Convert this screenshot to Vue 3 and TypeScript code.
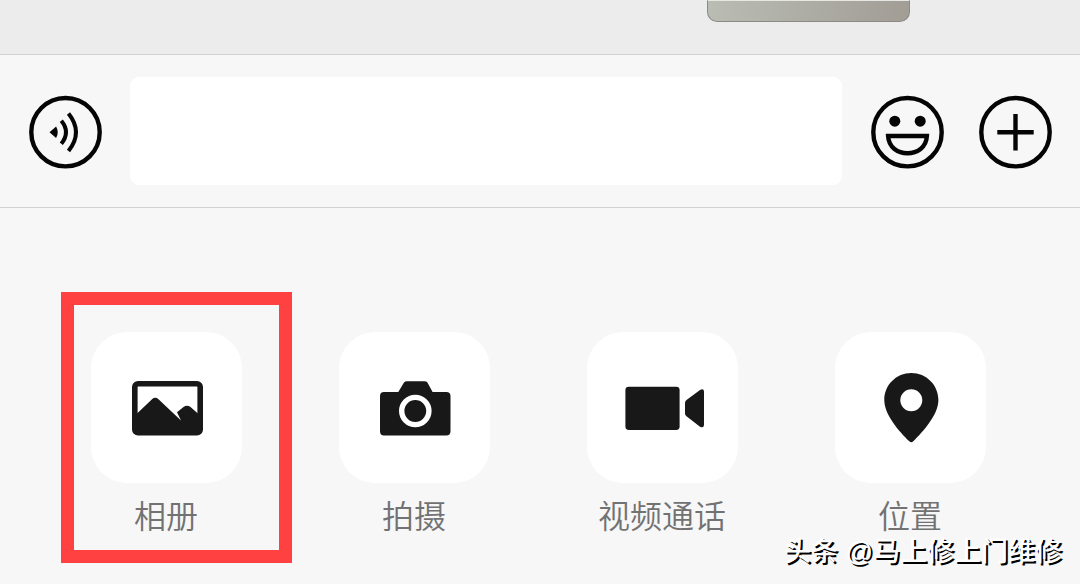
<script setup lang="ts">
import { ref } from 'vue'

type ActionId = 'album' | 'camera' | 'video' | 'location'

interface Action {
  id: ActionId
  label: string
  highlighted?: boolean
}

const message = ref('')

const actions: Action[] = [
  { id: 'album', label: '相册', highlighted: true },
  { id: 'camera', label: '拍摄' },
  { id: 'video', label: '视频通话' },
  { id: 'location', label: '位置' },
]
</script>

<template>
  <main class="chat">
    <div class="history">
      <div class="photo"></div>
    </div>

    <form class="composer" @submit.prevent>
      <button class="round" type="button" aria-label="语音">
        <svg viewBox="-1.5 -2.2 76 76" fill="none" stroke="#050505">
          <circle cx="37" cy="37" r="34.2" stroke-width="4.4" />
          <path d="M21 37 L27.6 31.2 Q31 37 27.6 42.8 Z" fill="#050505" stroke="none" />
          <path d="M32.8 25.6 Q42.2 37 32.8 48.6" stroke-width="4" />
          <path d="M40 18.3 Q55 37 40 55.8" stroke-width="4" />
        </svg>
      </button>
      <input v-model="message" class="message" type="text" aria-label="消息" />
      <div class="tools">
        <button class="round" type="button" aria-label="表情">
          <svg viewBox="-1.5 -2.2 76 76" fill="none" stroke="#050505">
            <circle cx="37" cy="37" r="34.2" stroke-width="4.4" />
            <circle cx="24.3" cy="26" r="5.5" fill="#050505" stroke="none" />
            <circle cx="49.7" cy="26" r="5.5" fill="#050505" stroke="none" />
            <path d="M17.6 40.8 H56.4 C55.4 63.8 18.6 63.8 17.6 40.8 Z" stroke-width="4.4" />
          </svg>
        </button>
        <button class="round" type="button" aria-label="更多">
          <svg viewBox="-1.5 -2.2 76 76" fill="none" stroke="#050505" stroke-width="4.4">
            <circle cx="37" cy="37" r="34.2" />
            <path d="M18.8 37 H55.2 M37 18.8 V55.2" />
          </svg>
        </button>
      </div>
    </form>

    <ul class="actions">
      <li v-for="action in actions" :key="action.id" class="action">
        <button class="entry" type="button">
          <span class="tile">
            <svg v-if="action.id === 'album'" viewBox="0 0 151 151">
              <rect x="43.8" y="51.8" width="65.4" height="48.8" rx="3.2" fill="none" stroke="#181818" stroke-width="5.6" />
              <path d="M45 82.4 L61 67.2 Q64.2 64.4 67.5 67.2 L90 88.5 L86 80.3 L92.5 75 Q96 72.6 99.5 75 L108 82.4 V101 H45 Z" fill="#181818" />
            </svg>
            <svg v-else-if="action.id === 'camera'" viewBox="0 0 151 151">
              <path d="M45 60 H59.3 L65 50.6 Q66 49.2 68 49.2 H85.4 Q87.4 49.2 88.4 50.6 L93.6 60 H107.3 Q111.5 60 111.5 64.2 V99.3 Q111.5 103.5 107.3 103.5 H45 Q41 103.5 41 99.3 V64.2 Q41 60 45 60 Z" fill="#181818" />
              <circle cx="76.3" cy="79" r="13.6" fill="#181818" stroke="#fff" stroke-width="5.4" />
            </svg>
            <svg v-else-if="action.id === 'video'" viewBox="0 0 151 151">
              <rect x="38.4" y="54.8" width="54.2" height="43.2" rx="3.4" fill="#181818" />
              <path d="M98 71 Q98 69 99.5 68 L113 58 Q116.8 56.2 117 59.5 V93 Q116.8 96.5 113 94.8 L99.5 84.2 Q98 83 98 81.5 Z" fill="#181818" />
            </svg>
            <svg v-else viewBox="0 0 151 151">
              <path fill-rule="evenodd" d="M76.3 41 C91.3 41 103.4 53 103.4 68 C103.4 83 88 99.5 78.3 109.3 Q76.3 111 74.3 109.3 C64.3 99.5 49.3 83 49.3 68 C49.3 53 61.3 41 76.3 41 Z M76.3 57.3 A11 11 0 1 0 76.3 79.3 A11 11 0 1 0 76.3 57.3 Z" fill="#181818" />
            </svg>
          </span>
          <span class="label">{{ action.label }}</span>
        </button>
        <span v-if="action.highlighted" class="highlight"></span>
      </li>
    </ul>

    <p class="credit">头条 @马上修上门维修</p>
  </main>
</template>

<style>
body {
  background: #f7f7f7;
}
</style>

<style scoped>
.chat {
  position: relative;
  min-height: 100vh;
  overflow: hidden;
  background: #f7f7f7;
  font-family: "Noto Sans CJK SC", sans-serif;
}

.history {
  display: flex;
  justify-content: flex-end;
  height: 54px;
  padding-right: 170px;
  background: #ececec;
  border-bottom: 1px solid #d2d2d2;
}

.photo {
  box-sizing: border-box;
  width: 203px;
  height: 22px;
  border: 1px solid #8b8a85;
  border-top: 1px solid #e6e7e2;
  border-radius: 0 0 10px 10px;
  background: linear-gradient(100deg, #babdb4, #aaa9a2 60%, #a29d95);
}

.composer {
  display: flex;
  align-items: center;
  gap: 27px;
  padding: 22px 27px;
  border-bottom: 1px solid #d2d2d2;
}

.round {
  flex: none;
  width: 76px;
  height: 76px;
  padding: 0;
  border: 0;
  background: none;
}

.round svg,
.tile svg {
  display: block;
  width: 100%;
  height: 100%;
}

.message {
  box-sizing: border-box;
  flex: 1;
  min-width: 0;
  height: 108px;
  padding: 0 24px;
  border: 0;
  border-radius: 9px;
  outline: 0;
  background: #fff;
  font: inherit;
  font-size: 40px;
}

.tools {
  display: flex;
  gap: 32px;
}

.actions {
  display: grid;
  grid-template-columns: repeat(4, 1fr);
  margin: 0;
  padding: 124px 46px 40px 42px;
  list-style: none;
}

.action {
  position: relative;
}

.entry {
  display: flex;
  flex-direction: column;
  align-items: center;
  gap: 15px;
  width: 100%;
  padding: 0;
  border: 0;
  background: none;
  font: inherit;
}

.tile {
  width: 151px;
  height: 151px;
  border-radius: 36px;
  background: #fff;
}

.label {
  color: #727272;
  font-size: 32px;
  font-weight: 350;
  line-height: 32px;
}

.highlight {
  position: absolute;
  top: -40px;
  right: -2px;
  bottom: -33px;
  left: 19px;
  border: 13px solid #ff4141;
  pointer-events: none;
}

.credit {
  position: absolute;
  right: 18px;
  bottom: 16px;
  margin: 0;
  color: #fff;
  font-family: "Liberation Sans", "Noto Sans CJK SC", sans-serif;
  font-size: 27px;
  font-weight: 500;
  line-height: 32px;
  text-shadow: 2px 2px 0 #000;
}
</style>
